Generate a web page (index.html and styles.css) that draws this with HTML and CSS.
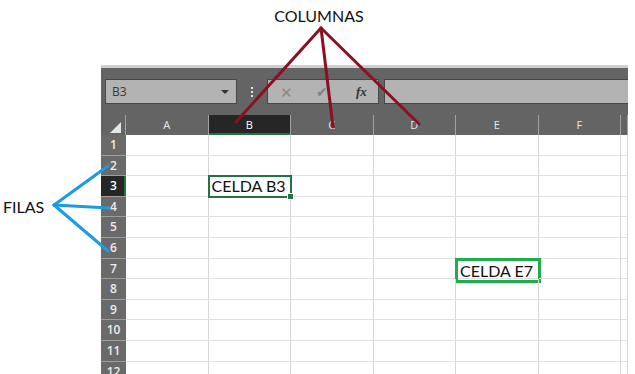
FILE: index.html
```html
<!DOCTYPE html>
<html lang="es">
<head>
    <meta charset="UTF-8">
    <meta name="viewport" content="width=device-width, initial-scale=1.0">
    <title>Filas y columnas</title>
    <link rel="stylesheet" href="styles.css">
</head>
<body>
    <div class="page">
        <div class="top-label">COLUMNAS</div>

        <div class="main">
            <div class="side-label">FILAS</div>

            <div class="excel">
                <div class="toolbar">
                    <div class="namebox">
                        <span>B3</span>
                        <span class="caret"></span>
                    </div>
                    <div class="dots"><i></i><i></i><i></i></div>
                    <div class="fxbox">
                        <span class="btn-x">&#x2715;</span>
                        <span class="btn-ok">&#x2714;</span>
                        <span class="btn-fx">fx</span>
                    </div>
                    <div class="formula"></div>
                </div>

                <div class="sheet">
                    <!-- column headers -->
                    <div class="corner"></div>
                    <div class="ch">A</div>
                    <div class="ch sel">B</div>
                    <div class="ch">C</div>
                    <div class="ch">D</div>
                    <div class="ch">E</div>
                    <div class="ch">F</div>
                    <div class="ch"></div>

                    <div class="rh">1</div>
                    <div class="c"></div><div class="c"></div><div class="c"></div><div class="c"></div><div class="c"></div><div class="c"></div><div class="c"></div>

                    <div class="rh">2</div>
                    <div class="c"></div><div class="c"></div><div class="c"></div><div class="c"></div><div class="c"></div><div class="c"></div><div class="c"></div>

                    <div class="rh sel">3</div>
                    <div class="c"></div><div class="c active">CELDA B3</div><div class="c"></div><div class="c"></div><div class="c"></div><div class="c"></div><div class="c"></div>

                    <div class="rh">4</div>
                    <div class="c"></div><div class="c"></div><div class="c"></div><div class="c"></div><div class="c"></div><div class="c"></div><div class="c"></div>

                    <div class="rh">5</div>
                    <div class="c"></div><div class="c"></div><div class="c"></div><div class="c"></div><div class="c"></div><div class="c"></div><div class="c"></div>

                    <div class="rh">6</div>
                    <div class="c"></div><div class="c"></div><div class="c"></div><div class="c"></div><div class="c"></div><div class="c"></div><div class="c"></div>

                    <div class="rh">7</div>
                    <div class="c"></div><div class="c"></div><div class="c"></div><div class="c"></div><div class="c"><span class="callout">CELDA E7</span></div><div class="c"></div><div class="c"></div>

                    <div class="rh">8</div>
                    <div class="c"></div><div class="c"></div><div class="c"></div><div class="c"></div><div class="c"></div><div class="c"></div><div class="c"></div>

                    <div class="rh">9</div>
                    <div class="c"></div><div class="c"></div><div class="c"></div><div class="c"></div><div class="c"></div><div class="c"></div><div class="c"></div>

                    <div class="rh">10</div>
                    <div class="c"></div><div class="c"></div><div class="c"></div><div class="c"></div><div class="c"></div><div class="c"></div><div class="c"></div>

                    <div class="rh">11</div>
                    <div class="c"></div><div class="c"></div><div class="c"></div><div class="c"></div><div class="c"></div><div class="c"></div><div class="c"></div>

                    <div class="rh">12</div>
                    <div class="c"></div><div class="c"></div><div class="c"></div><div class="c"></div><div class="c"></div><div class="c"></div><div class="c"></div>
                </div>
            </div>
        </div>

        <!-- annotation arrows drawn over the screenshot -->
        <svg class="arrows" width="635" height="374" viewBox="0 0 635 374">
            <g stroke="#8b1022" stroke-width="3" stroke-linecap="round">
                <line x1="321" y1="28" x2="236" y2="122"/>
                <line x1="321" y1="28" x2="333" y2="127"/>
                <line x1="321" y1="28" x2="419" y2="124"/>
            </g>
            <g stroke="#1b9ce2" stroke-width="3" stroke-linecap="round">
                <line x1="54" y1="205" x2="108" y2="166"/>
                <line x1="54" y1="205" x2="109" y2="208"/>
                <line x1="54" y1="205" x2="108" y2="251"/>
            </g>
        </svg>
    </div>
</body>
</html>
```

FILE: styles.css
```css
body {
    margin: 0;
    background: #fff;
    font-family: Lato, "Open Sans", sans-serif;
    color: #111;
}
.page {
    position: relative;
    width: 635px;
    height: 374px;
    overflow: hidden;
}
.top-label {
    height: 65px;
    box-sizing: border-box;
    padding: 6px 0 0 3px;
    text-align: center;
    font-size: 16px;
    line-height: 20px;
}
.main {
    display: flex;
}
.side-label {
    width: 101px;
    flex: none;
    box-sizing: border-box;
    padding: 132px 0 0 3px;
    font-size: 16px;
    line-height: 20px;
}
.excel {
    width: 527px;
    flex: none;
    font-family: "Open Sans", "Noto Sans", sans-serif;
}

/* formula bar */
.toolbar {
    display: flex;
    align-items: flex-start;
    height: 50px;
    box-sizing: border-box;
    border-top: 3px solid #cfcfcf;
    background: #646464;
    padding: 11px 0 0 4px;
}
.namebox, .fxbox, .formula {
    height: 25px;
    box-sizing: border-box;
    background: #b3b3b3;
    border: 1px solid #474747;
}
.namebox {
    width: 132px;
    display: flex;
    align-items: center;
    justify-content: space-between;
    padding: 0 7px 0 6px;
    font-size: 12px;
    color: #3a3a3a;
}
.caret {
    width: 0;
    height: 0;
    border-left: 4px solid transparent;
    border-right: 4px solid transparent;
    border-top: 4px solid #333;
}
.dots {
    display: flex;
    flex-direction: column;
    gap: 2px;
    margin: 8px 14px 0;
}
.dots i {
    width: 2px;
    height: 2px;
    background: #e6e6e6;
}
.fxbox {
    width: 112px;
    display: flex;
    align-items: center;
    padding-left: 12px;
    color: #888;
}
.btn-x {
    font-size: 15px;
    width: 36px;
}
.btn-ok {
    font-size: 14px;
    width: 40px;
    color: #808080;
}
.btn-fx {
    font-family: "Liberation Serif", serif;
    font-style: italic;
    font-weight: bold;
    font-size: 13px;
    color: #333;
}
.formula {
    flex: 1;
    margin-left: 5px;
    border-right: none;
}

/* sheet grid */
.sheet {
    display: grid;
    grid-template-columns: 25px repeat(6, 82.5px) 7px;
    grid-template-rows: 20px repeat(12, 20.6px);
    background: #fff;
}
.corner {
    position: relative;
    background: #646464;
    border-right: 1px solid #a3a3a3;
}
.corner::after {
    content: "";
    position: absolute;
    right: 4px;
    bottom: 2px;
    border-left: 11px solid transparent;
    border-bottom: 11px solid #e6e6e6;
}
.ch {
    background: #646464;
    color: #e8e8e8;
    border-right: 1px solid #a3a3a3;
    font-size: 11px;
    line-height: 20px;
    text-align: center;
}
.ch.sel {
    background: #262626;
    color: #fff;
    box-shadow: inset 0 -2px 0 #217346;
}
.rh {
    background: #6a6a6a;
    color: #ececec;
    border-bottom: 1px solid #9e9e9e;
    font-size: 12px;
    font-weight: 600;
    line-height: 20px;
    text-align: center;
}
.rh.sel {
    background: #262626;
    color: #fff;
    box-shadow: inset -2px 0 0 #217346;
}
.c {
    position: relative;
    box-sizing: border-box;
    border-right: 1px solid #d6d6d6;
    border-bottom: 1px solid #e0e0e0;
    font-family: Lato, sans-serif;
    font-size: 16px;
    line-height: 20px;
    white-space: nowrap;
}
.c.active {
    padding-left: 3px;
    outline: 2px solid #217346;
    outline-offset: -1px;
    z-index: 1;
}
.c.active::after {
    content: "";
    position: absolute;
    right: -4px;
    bottom: -4px;
    width: 5px;
    height: 5px;
    background: #217346;
    border: 1px solid #fff;
}
.callout {
    position: absolute;
    left: -1px;
    top: -1px;
    width: 86px;
    height: 25px;
    box-sizing: border-box;
    border: 3px solid #1fae4b;
    padding-left: 2px;
    line-height: 19px;
}
.arrows {
    position: absolute;
    left: 0;
    top: 0;
    pointer-events: none;
}
```
